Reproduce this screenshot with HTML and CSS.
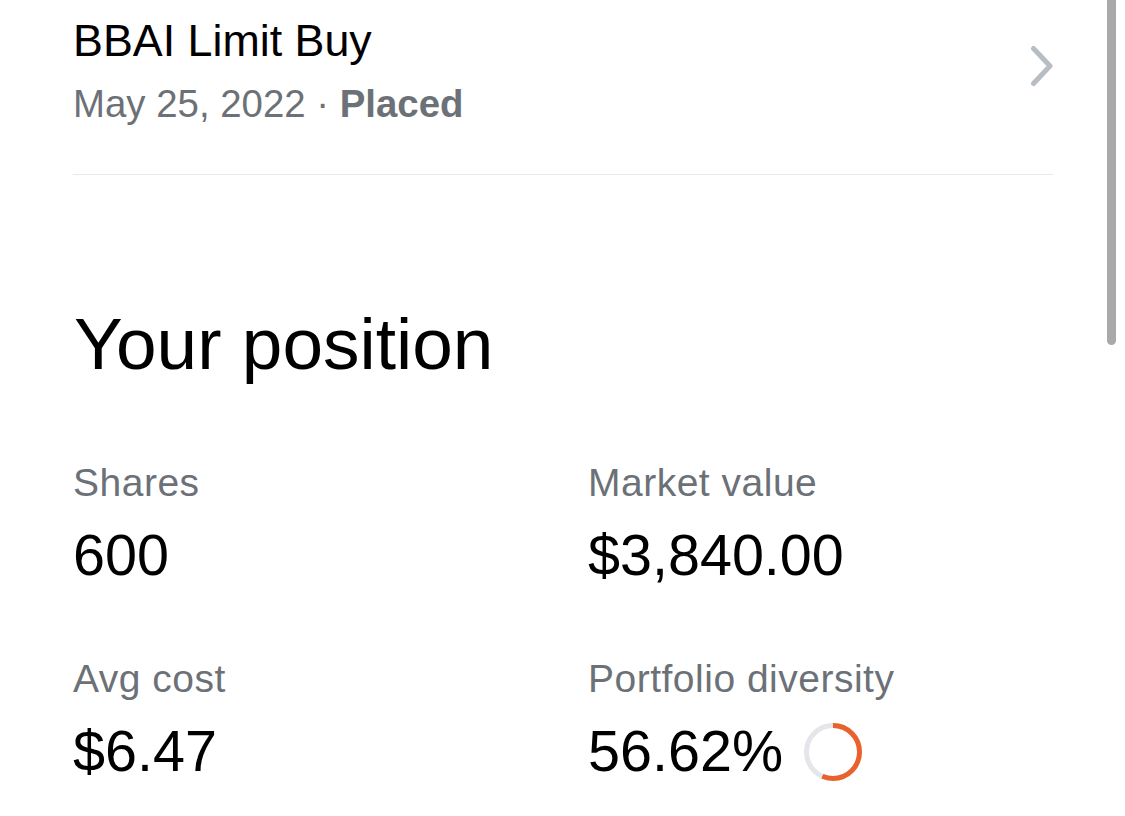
FILE: index.html
```html
<!DOCTYPE html>
<html lang="en">
<head>
<meta charset="utf-8">
<title>Your position</title>
<link rel="stylesheet" href="styles.css">
</head>
<body>
<div class="scrollbar"></div>
<main class="page">
  <div class="order-row">
    <div class="order-text">
      <div class="order-title">BBAI Limit Buy</div>
      <div class="order-sub">May 25, 2022 · <strong>Placed</strong></div>
    </div>
    <svg class="chevron" width="24" height="42" viewBox="0 0 24 42" aria-hidden="true">
      <path d="M3.5 3.5 L20 21 L3.5 38.5" fill="none" stroke="#b7bdc3" stroke-width="5" stroke-linecap="round" stroke-linejoin="round"/>
    </svg>
  </div>

  <h1 class="section-title">Your position</h1>

  <div class="stats">
    <div class="stat">
      <div class="stat-label">Shares</div>
      <div class="stat-value">600</div>
    </div>
    <div class="stat">
      <div class="stat-label">Market value</div>
      <div class="stat-value">$3,840.00</div>
    </div>
    <div class="stat">
      <div class="stat-label">Avg cost</div>
      <div class="stat-value">$6.47</div>
    </div>
    <div class="stat">
      <div class="stat-label">Portfolio diversity</div>
      <div class="stat-value with-ring">
        <span>56.62%</span>
        <svg class="ring" width="60" height="60" viewBox="0 0 60 60" aria-hidden="true">
          <circle cx="30" cy="30" r="26.5" fill="none" stroke="#e4e6e9" stroke-width="5"/>
          <circle cx="30" cy="30" r="26.5" fill="none" stroke="#e9612c" stroke-width="5" pathLength="100" stroke-dasharray="56.62 100" transform="rotate(-90 30 30)"/>
        </svg>
      </div>
    </div>
  </div>
</main>
</body>
</html>
```

FILE: styles.css
```css
html, body {
  margin: 0;
  padding: 0;
  background: #ffffff;
}

body {
  font-family: "Liberation Sans", Arial, Helvetica, sans-serif;
  color: #000000;
  width: 1125px;
  height: 816px;
  overflow: hidden;
  position: relative;
}

.scrollbar {
  position: absolute;
  top: -10px;
  left: 1107px;
  width: 9px;
  height: 355px;
  background: #a9a9a9;
  border-radius: 5px;
}

.page {
  padding: 16px 72px 0 73px;
}

.order-row {
  display: flex;
  align-items: flex-start;
  justify-content: space-between;
  padding-bottom: 48px;
  border-bottom: 1px solid #e9e9ea;
}

.order-title {
  font-size: 44.8px;
  line-height: 48px;
  color: #000000;
}

.order-sub {
  margin-top: 18px;
  font-size: 38.4px;
  line-height: 44px;
  color: #6c7177;
}

.order-sub strong {
  font-weight: 700;
  color: #6c7177;
}

.chevron {
  margin-top: 29px;
  margin-right: -1px;
  flex: none;
}

.section-title {
  margin: 129px 0 0 1px;
  font-size: 73px;
  line-height: 80px;
  font-weight: 400;
  color: #000000;
}

.stats {
  display: grid;
  grid-template-columns: 515px 1fr;
  row-gap: 70px;
  margin-top: 77px;
  padding-left: 0;
}

.stat-label {
  font-size: 39px;
  line-height: 44px;
  letter-spacing: 0.5px;
  color: #6c7177;
}

.stat-value {
  margin-top: 18px;
  font-size: 57.5px;
  line-height: 64px;
  color: #000000;
}

.with-ring {
  display: flex;
  align-items: center;
  gap: 20px;
}

.ring {
  flex: none;
  margin-top: 2px;
}
```
